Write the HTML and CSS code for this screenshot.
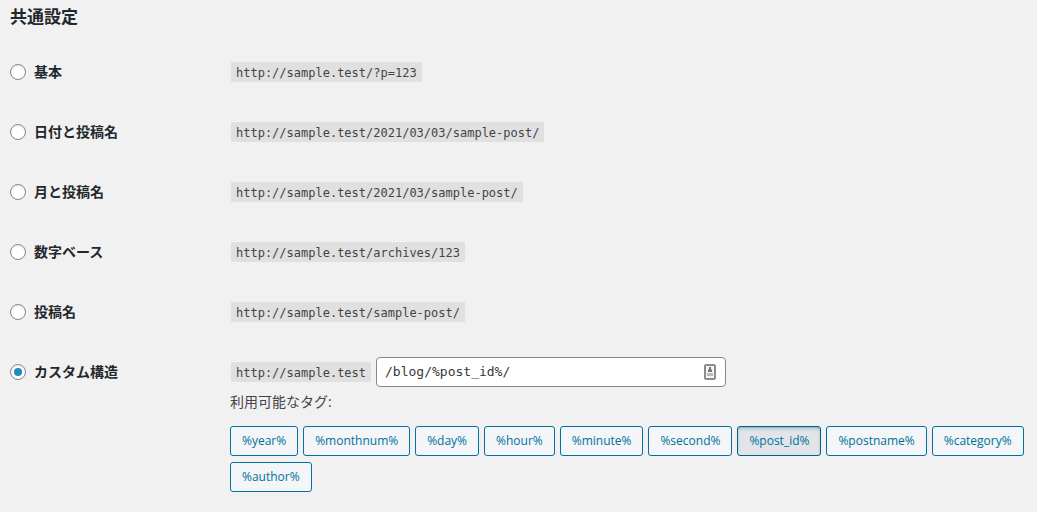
FILE: index.html
```html
<!DOCTYPE html>
<html lang="ja">
<head>
<meta charset="utf-8">
<title>共通設定</title>
<link rel="stylesheet" href="styles.css">
</head>
<body>
<main class="settings">
<h2 class="title">共通設定</h2>
<form class="options">
<div class="row"><label class="choice"><input type="radio" name="structure">基本</label><code>http://sample.test/?p=123</code></div>
<div class="row"><label class="choice"><input type="radio" name="structure">日付と投稿名</label><code>http://sample.test/2021/03/03/sample-post/</code></div>
<div class="row"><label class="choice"><input type="radio" name="structure">月と投稿名</label><code>http://sample.test/2021/03/sample-post/</code></div>
<div class="row"><label class="choice"><input type="radio" name="structure">数字ベース</label><code>http://sample.test/archives/123</code></div>
<div class="row"><label class="choice"><input type="radio" name="structure">投稿名</label><code>http://sample.test/sample-post/</code></div>
<div class="row custom"><label class="choice"><input type="radio" name="structure" checked>カスタム構造</label>
<div class="detail">
<div class="entry"><code>http://sample.test</code>
<div class="field"><input class="path" type="text" value="/blog/%post_id%/" aria-label="カスタム構造">
<svg class="key" viewBox="0 0 12 16" aria-hidden="true"><rect x="1" y="1" width="10" height="14" rx="1" fill="#f4f4f4" stroke="#8c8c8c" stroke-width="2"/><path d="M5 3h2v2l1 1v2H4V6l1-1z" fill="#777"/><path d="M3 9h6v3H3z" fill="#bbb"/></svg></div></div>
<p class="hint">利用可能なタグ:</p>
<div class="tags">
<button type="button">%year%</button>
<button type="button">%monthnum%</button>
<button type="button">%day%</button>
<button type="button">%hour%</button>
<button type="button">%minute%</button>
<button type="button">%second%</button>
<button type="button" class="active" aria-pressed="true">%post_id%</button>
<button type="button">%postname%</button>
<button type="button">%category%</button>
<button type="button">%author%</button>
</div>
</div></div>
</form>
</main>
</body>
</html>
```
FILE: styles.css
```css
* { box-sizing: border-box; }
body { margin: 0; background: #f1f1f1; color: #444; font: 14px/20px "Open Sans", "Noto Sans CJK JP", sans-serif; }
.settings { padding: 5px 10px 20px; }
.title { margin: 0; font-size: 17px; line-height: 24px; font-weight: 700; color: #23282d; }
.options { padding-top: 13px; }
.row { display: grid; grid-template-columns: 220px 1fr; min-height: 60px; padding-top: 20px; align-items: start; }
.choice { display: flex; align-items: center; gap: 8px; font-weight: 700; color: #23282d; }
.choice input { appearance: none; width: 16px; height: 16px; margin: 0; border: 1px solid #7e8993; border-radius: 50%; background: #fff; box-shadow: inset 0 1px 2px rgba(0, 0, 0, .1); display: grid; place-items: center; }
.choice input:checked::before { content: ""; width: 8px; height: 8px; border-radius: 50%; background: #1e8cbe; }
code { justify-self: start; margin-left: 1px; padding: 2px 5px 0; background: #e0e0e0; font: 12px/18px "DejaVu Sans Mono", monospace; }
.custom { padding-top: 15px; }
.custom .choice { padding-top: 5px; }
.entry { display: flex; align-items: center; gap: 5px; }
.field { position: relative; width: 350px; }
.path { display: block; width: 100%; height: 30px; padding: 0 30px 2px 8px; border: 1px solid #7e8993; border-radius: 4px; background: #fff; color: #32373c; font: 13px/20px "DejaVu Sans Mono", monospace; }
.key { position: absolute; right: 10px; top: 7px; width: 12px; height: 16px; }
.hint { margin: 5px 0 14px; }
.tags { display: flex; flex-wrap: wrap; gap: 6px 5px; }
.tags button { height: 30px; padding: 0 11px; border: 1px solid #0071a1; border-radius: 3px; background: #f3f5f6; color: #0071a1; font: 12px/28px "Open Sans", sans-serif; }
.tags .active { background: #e2e4e7; border-color: #016087; box-shadow: inset 0 2px 5px -3px #016087; }
```
